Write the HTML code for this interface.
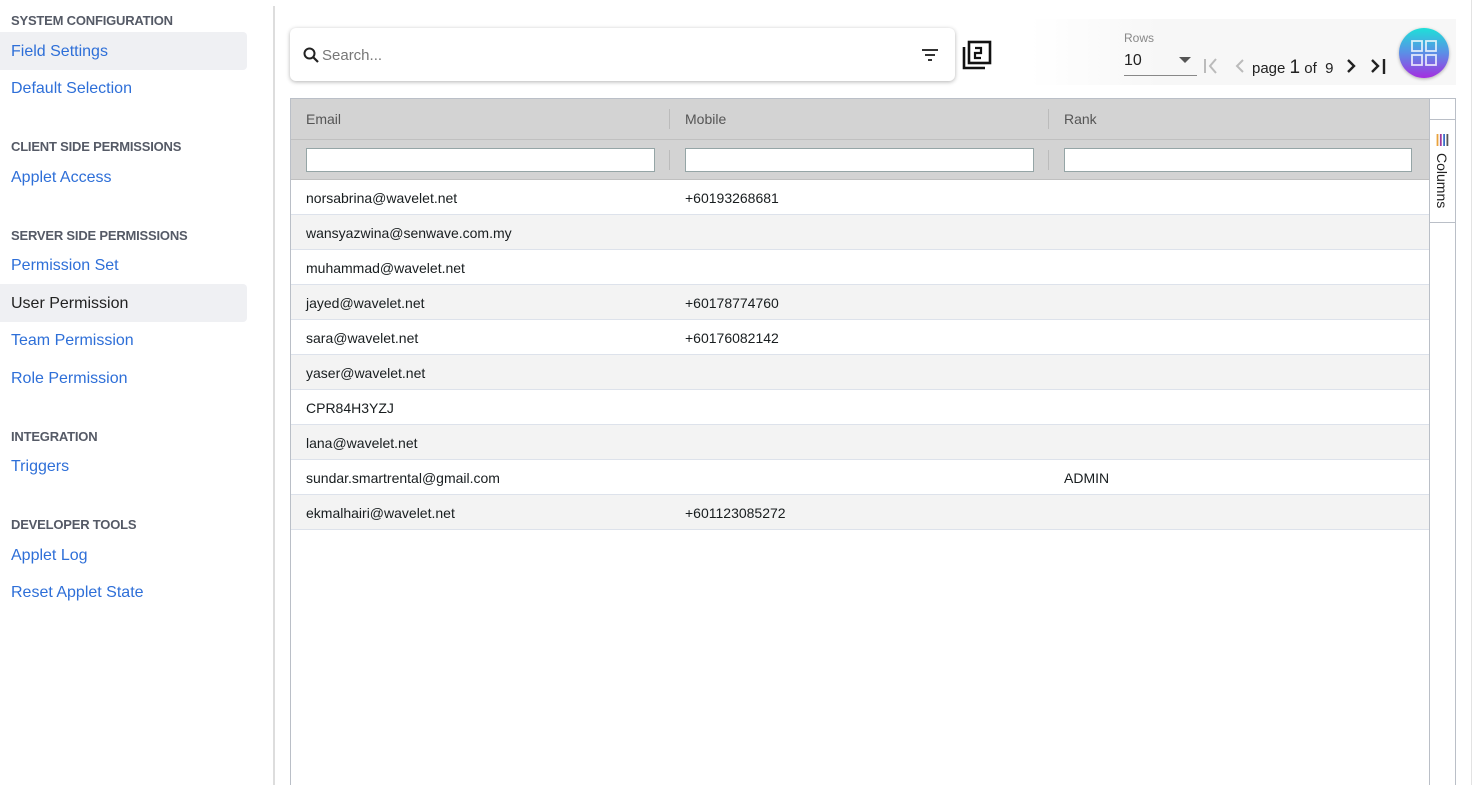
<!DOCTYPE html><html><head><style>
*{margin:0;padding:0;box-sizing:border-box}
body{width:1484px;height:785px;background:#fff;font-family:"Liberation Sans",sans-serif;position:relative;overflow:hidden}
.a{position:absolute}
.h{font-size:13px;font-weight:bold;color:#555a66;left:11px;letter-spacing:-0.2px}
.l{font-size:16px;color:#2e6fd8;left:11px}
.sel{background:#eff0f3;left:0;width:247px;height:38px;border-radius:0 4px 4px 0}
.row{left:291px;width:1138px;height:35px;border-bottom:1px solid #dde2eb;font-size:14px;color:#181d1f}
.row span{position:absolute;top:10px}
.fi{top:148px;height:24px;width:349px;border:1px solid #95a5a6;background:#fff}
</style></head><body>
<div class="a" style="left:273px;top:6px;width:2px;height:779px;background:#ddd"></div>
<div class="a" style="left:1471px;top:0;width:1px;height:785px;background:#e3e3e3"></div>
<div class="a h" style="top:13px">SYSTEM CONFIGURATION</div>
<div class="a sel" style="top:32px"></div>
<div class="a l" style="top:43px">Field Settings</div>
<div class="a l" style="top:80px">Default Selection</div>
<div class="a h" style="top:139px">CLIENT SIDE PERMISSIONS</div>
<div class="a l" style="top:169px">Applet Access</div>
<div class="a h" style="top:228px">SERVER SIDE PERMISSIONS</div>
<div class="a l" style="top:257px">Permission Set</div>
<div class="a sel" style="top:284px"></div>
<div class="a l" style="top:295px;color:#222">User Permission</div>
<div class="a l" style="top:332px">Team Permission</div>
<div class="a l" style="top:370px">Role Permission</div>
<div class="a h" style="top:429px">INTEGRATION</div>
<div class="a l" style="top:458px">Triggers</div>
<div class="a h" style="top:517px">DEVELOPER TOOLS</div>
<div class="a l" style="top:547px">Applet Log</div>
<div class="a l" style="top:584px">Reset Applet State</div>

<div class="a" style="left:290px;top:28px;width:665px;height:53px;background:#fff;border-radius:6px;box-shadow:0 1px 4px rgba(0,0,0,.3)"></div>
<svg class="a" style="left:303px;top:47px" width="16" height="16" viewBox="0 0 16 16"><circle cx="6.5" cy="6.5" r="5" fill="none" stroke="#222" stroke-width="2"/><path d="M10 10l5 5" stroke="#222" stroke-width="2.2"/></svg>
<div class="a" style="left:322px;top:47px;font-size:15px;color:#777">Search...</div>
<svg class="a" style="left:921px;top:48px" width="18" height="14"><path d="M1 2h16M4 7h10M7 12h4" stroke="#333" stroke-width="2"/></svg>
<svg class="a" style="left:962px;top:40px" width="30" height="30" viewBox="0 0 30 30"><rect x="7" y="2" width="21" height="21" fill="none" stroke="#111" stroke-width="2.6"/><path d="M2 7v21h21" fill="none" stroke="#111" stroke-width="2.6"/><path d="M13 8h6v5h-6v5h6" fill="none" stroke="#111" stroke-width="2.2"/></svg>

<div class="a" style="left:1030px;top:19px;width:426px;height:66px;background:linear-gradient(90deg,#fff,#f7f7f7 30%)"></div>
<div class="a" style="left:1124px;top:31px;font-size:12px;color:#888">Rows</div>
<div class="a" style="left:1124px;top:52px;font-size:16px;color:#222">10</div>
<div class="a" style="left:1124px;top:75px;width:73px;height:1px;background:#888"></div>
<div class="a" style="left:1179px;top:57px;border:6px solid transparent;border-top:6px solid #555"></div>
<svg class="a" style="left:1202px;top:57px" width="190" height="20"><path d="M3 2v14M14 2l-6 7 6 7" fill="none" stroke="#bbb" stroke-width="2"/><path d="M41 3l-6 6 6 6" fill="none" stroke="#bbb" stroke-width="2"/><path d="M146 3l6 6-6 6" fill="none" stroke="#222" stroke-width="2.4"/><path d="M170 3l6 6-6 6M182 2v15" fill="none" stroke="#222" stroke-width="2.4"/></svg>
<div class="a" style="left:1252px;top:57px;font-size:15px;color:#222">page <b style="font-size:19px;font-weight:normal">1</b> of &nbsp;9</div>
<div class="a" style="left:1399px;top:28px;width:50px;height:50px;border-radius:50%;background:linear-gradient(#1ee0d8,#5c8ee6 50%,#a42ee0);box-shadow:0 1px 3px rgba(0,0,0,.3)"></div>
<svg class="a" style="left:1411px;top:40px" width="26" height="26"><g fill="none" stroke="#fff" stroke-opacity=".8" stroke-width="1.8"><rect x="1" y="1" width="10" height="10"/><rect x="15" y="1" width="10" height="10"/><rect x="1" y="15" width="10" height="10"/><rect x="15" y="15" width="10" height="10"/></g></svg>

<div class="a" style="left:290px;top:98px;width:1166px;height:687px;border:1px solid #babfc7;border-bottom:none"></div>
<div class="a" style="left:291px;top:99px;width:1138px;height:81px;background:#d3d3d3"></div>
<div class="a" style="left:291px;top:139px;width:1138px;height:1px;background:#c0c0c0"></div>
<div class="a" style="left:291px;top:179px;width:1138px;height:1px;background:#c0c0c0"></div>
<div class="a" style="left:669px;top:109px;width:1px;height:20px;background:#bbb"></div>
<div class="a" style="left:1048px;top:109px;width:1px;height:20px;background:#bbb"></div>
<div class="a" style="left:669px;top:150px;width:1px;height:20px;background:#bbb"></div>
<div class="a" style="left:1048px;top:150px;width:1px;height:20px;background:#bbb"></div>
<div class="a" style="left:306px;top:111px;font-size:14px;color:#555">Email</div>
<div class="a" style="left:685px;top:111px;font-size:14px;color:#555">Mobile</div>
<div class="a" style="left:1064px;top:111px;font-size:14px;color:#555">Rank</div>
<div class="a fi" style="left:306px"></div><div class="a fi" style="left:685px"></div><div class="a fi" style="left:1064px;width:348px"></div>
<div class="a" style="left:1429px;top:99px;width:1px;height:686px;background:#babfc7"></div>
<div class="a" style="left:1430px;top:119px;width:25px;height:1px;background:#babfc7"></div>
<div class="a" style="left:1430px;top:222px;width:25px;height:1px;background:#babfc7"></div>
<svg class="a" style="left:1436px;top:134px" width="13" height="12"><path d="M1.5 0v12" stroke="#e8a33d" stroke-width="1.8"/><path d="M4.8 0v12" stroke="#a0399b" stroke-width="1.8"/><path d="M8.1 0v12" stroke="#3a6fc8" stroke-width="1.8"/><path d="M11.4 0v12" stroke="#555" stroke-width="1.8"/></svg>
<div class="a" style="left:1434px;top:153px;font-size:14px;color:#222;writing-mode:vertical-rl">Columns</div>

<div class="a row" style="top:180px;background:#fff"><span style="left:15px">norsabrina@wavelet.net</span><span style="left:394px">+60193268681</span></div>
<div class="a row" style="top:215px;background:#f3f3f3"><span style="left:15px">wansyazwina@senwave.com.my</span></div>
<div class="a row" style="top:250px;background:#fff"><span style="left:15px">muhammad@wavelet.net</span></div>
<div class="a row" style="top:285px;background:#f3f3f3"><span style="left:15px">jayed@wavelet.net</span><span style="left:394px">+60178774760</span></div>
<div class="a row" style="top:320px;background:#fff"><span style="left:15px">sara@wavelet.net</span><span style="left:394px">+60176082142</span></div>
<div class="a row" style="top:355px;background:#f3f3f3"><span style="left:15px">yaser@wavelet.net</span></div>
<div class="a row" style="top:390px;background:#fff"><span style="left:15px">CPR84H3YZJ</span></div>
<div class="a row" style="top:425px;background:#f3f3f3"><span style="left:15px">lana@wavelet.net</span></div>
<div class="a row" style="top:460px;background:#fff"><span style="left:15px">sundar.smartrental@gmail.com</span><span style="left:773px">ADMIN</span></div>
<div class="a row" style="top:495px;background:#f3f3f3"><span style="left:15px">ekmalhairi@wavelet.net</span><span style="left:394px">+601123085272</span></div>
</body></html>
